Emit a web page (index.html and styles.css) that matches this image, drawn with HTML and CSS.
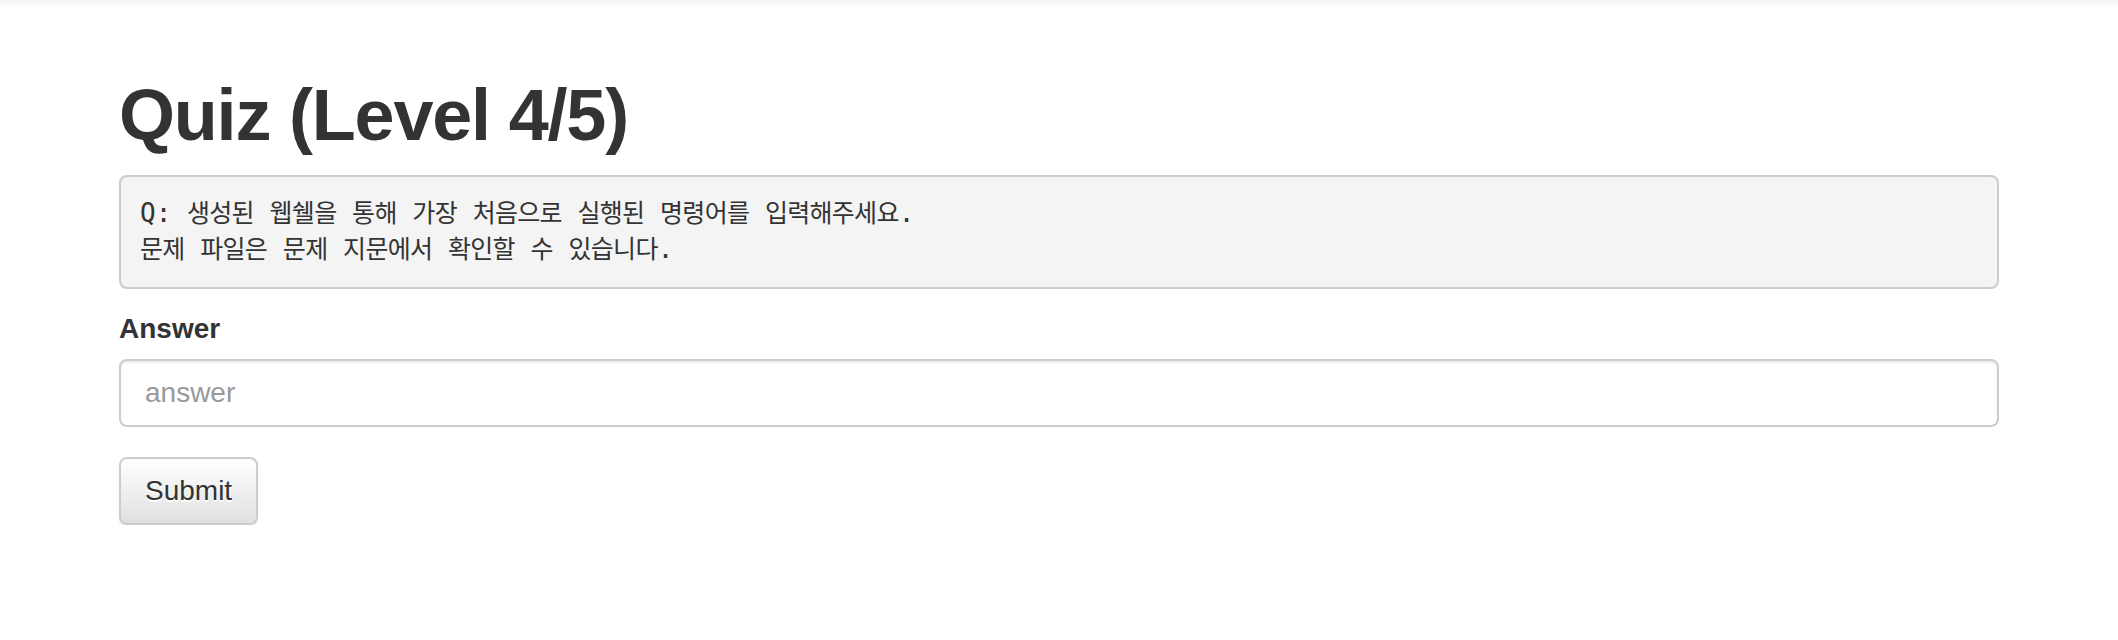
FILE: index.html
```html
<!DOCTYPE html>
<html lang="ko">
<head>
<meta charset="utf-8">
<title>Quiz (Level 4/5)</title>
<link rel="stylesheet" href="styles.css">
</head>
<body>
<div class="top-shadow"></div>
<main class="container">
  <h1 class="title">Quiz (Level 4/5)</h1>
  <pre class="question">Q: <span class="ko">생성된</span> <span class="ko">웹쉘을</span> <span class="ko">통해</span> <span class="ko">가장</span> <span class="ko">처음으로</span> <span class="ko">실행된</span> <span class="ko">명령어를</span> <span class="ko">입력해주세요</span>.
<span class="ko">문제</span> <span class="ko">파일은</span> <span class="ko">문제</span> <span class="ko">지문에서</span> <span class="ko">확인할</span> <span class="ko">수</span> <span class="ko">있습니다</span>.</pre>
  <form class="quiz-form">
    <div class="form-group">
      <label class="label" for="answer">Answer</label>
      <input class="form-control" id="answer" type="text" placeholder="answer">
    </div>
    <button class="btn" type="button">Submit</button>
  </form>
</main>
</body>
</html>
```

FILE: styles.css
```css
* {
  box-sizing: border-box;
}

html, body {
  margin: 0;
  padding: 0;
  background: #fff;
}

body {
  font-family: "Liberation Sans", Arial, sans-serif;
  color: #333;
  font-size: 28px;
  line-height: 40px;
}

.top-shadow {
  height: 8px;
  background: linear-gradient(to bottom, #f2f2f2, #ffffff);
}

.container {
  width: 1880px;
  margin: 0 auto;
  padding-top: 28px;
}

.title {
  margin: 40px 0 20px;
  font-size: 72px;
  line-height: 79.2px;
  font-weight: 700;
  letter-spacing: -1.2px;
  color: #333;
}

.question {
  margin: 0 0 20px;
  padding: 18px 19px 20px;
  background: #f4f4f4;
  border: 2px solid #ccc;
  border-radius: 8px;
  font-family: "DejaVu Sans Mono", "Liberation Mono", "Noto Sans CJK KR", monospace;
  font-size: 26px;
  line-height: 36px;
  color: #333;
  white-space: pre-wrap;
}

.ko {
  font-family: "Noto Sans CJK KR", sans-serif;
  font-size: 25px;
  line-height: 25px;
  letter-spacing: -0.7px;
}

.quiz-form {
  margin: 0;
}

.form-group {
  margin-bottom: 30px;
}

.label {
  display: inline-block;
  margin-bottom: 10px;
  font-weight: 700;
  font-size: 28px;
  line-height: 40px;
}

.form-control {
  display: block;
  width: 100%;
  height: 68px;
  padding: 12px 24px;
  font-family: "Liberation Sans", Arial, sans-serif;
  font-size: 28px;
  line-height: 40px;
  color: #555;
  background: #fff;
  border: 2px solid #ccc;
  border-radius: 8px;
  box-shadow: inset 0 2px 2px rgba(0, 0, 0, 0.075);
  outline: none;
}

.form-control::placeholder {
  color: #999;
}

.btn {
  display: inline-block;
  height: 68px;
  padding: 12px 24px;
  font-family: "Liberation Sans", Arial, sans-serif;
  font-size: 28px;
  line-height: 40px;
  color: #333;
  text-shadow: 0 2px 0 #fff;
  background-image: linear-gradient(to bottom, #fff 0, #e0e0e0 100%);
  border: 2px solid #ccc;
  border-radius: 8px;
  box-shadow: inset 0 2px 0 rgba(255, 255, 255, 0.15), 0 2px 2px rgba(0, 0, 0, 0.075);
  cursor: pointer;
}
```
